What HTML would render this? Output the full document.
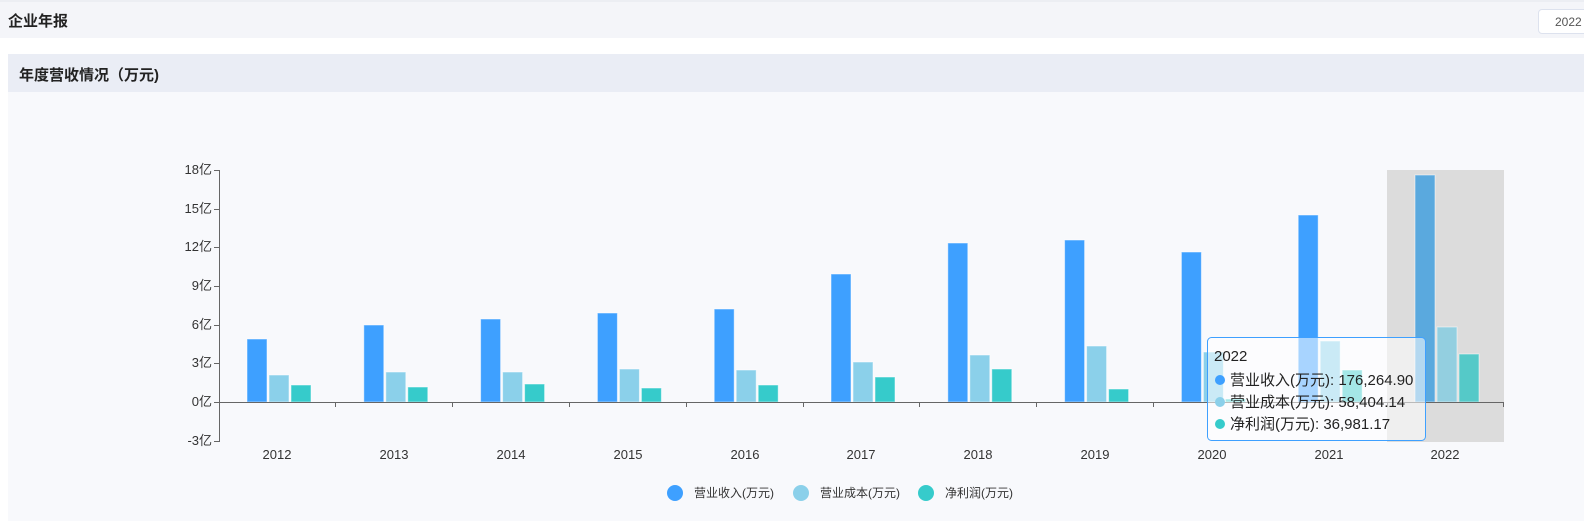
<!DOCTYPE html>
<html><head><meta charset="utf-8"><style>
*{margin:0;padding:0;box-sizing:border-box}
body{width:1584px;height:521px;background:#fff;font-family:"Liberation Sans","Noto Sans CJK SC",sans-serif;position:relative;overflow:hidden}
.top{position:absolute;left:0;top:0;width:1584px;height:38px;background:#f4f5f9;border-top:2px solid #eceef3}
.top .t{position:absolute;left:8px;top:8px;font-size:15px;font-weight:bold;color:#222}
.sel{position:absolute;left:1538px;top:7px;width:80px;height:25px;background:#fff;border:1px solid #dde2ee;border-radius:4px;font-size:12px;color:#555;padding:5px 0 0 16px}
.sec{position:absolute;left:8px;top:54px;width:1576px;height:38px;background:#eaedf5}
.sec .t{position:absolute;left:11px;top:10px;font-size:15px;font-weight:bold;color:#222}
.chart{position:absolute;left:8px;top:92px;width:1576px;height:429px;background:#f8f9fc}
svg{position:absolute;left:0;top:0}
</style></head><body>
<div class="top"><div class="t">企业年报</div><div class="sel">2022</div></div>
<div class="sec"><div class="t">年度营收情况（万元)</div></div>
<div class="chart"></div>
<svg width="1584" height="521" font-family="Liberation Sans, Noto Sans CJK SC, sans-serif">
<rect x="1387" y="170" width="117" height="272" fill="#dcdcdc"/>
<g font-size="13" fill="#333" text-anchor="end">
<text x="212" y="174">18亿</text><text x="212" y="213">15亿</text><text x="212" y="251">12亿</text><text x="212" y="290">9亿</text><text x="212" y="329">6亿</text><text x="212" y="367">3亿</text><text x="212" y="406">0亿</text><text x="212" y="445">-3亿</text>
</g>
<g stroke="#666" stroke-width="1">
<line x1="219.5" y1="170" x2="219.5" y2="442"/>
<line x1="214" y1="170.5" x2="219" y2="170.5"/><line x1="214" y1="209.5" x2="219" y2="209.5"/><line x1="214" y1="247.5" x2="219" y2="247.5"/><line x1="214" y1="286.5" x2="219" y2="286.5"/><line x1="214" y1="325.5" x2="219" y2="325.5"/><line x1="214" y1="363.5" x2="219" y2="363.5"/><line x1="214" y1="402.5" x2="219" y2="402.5"/><line x1="214" y1="441.5" x2="219" y2="441.5"/>
</g>
<g stroke="#fff" stroke-opacity=".5" stroke-width="1">
<g fill="#3ea0ff">
<rect x="247" y="339" width="20" height="63"/><rect x="363.8" y="325" width="20" height="77"/><rect x="480.6" y="319" width="20" height="83"/><rect x="597.4" y="313" width="20" height="89"/><rect x="714.2" y="309" width="20" height="93"/><rect x="831" y="274" width="20" height="128"/><rect x="947.8" y="243" width="20" height="159"/><rect x="1064.6" y="240" width="20" height="162"/><rect x="1181.4" y="252" width="20" height="150"/><rect x="1298.2" y="215" width="20" height="187"/><rect x="1415" y="175" width="20" height="227" fill="#5aa9de"/>
</g>
<g fill="#8bd0ea">
<rect x="269" y="375" width="20" height="27"/><rect x="385.8" y="372" width="20" height="30"/><rect x="502.6" y="372" width="20" height="30"/><rect x="619.4" y="369" width="20" height="33"/><rect x="736.2" y="370" width="20" height="32"/><rect x="853" y="362" width="20" height="40"/><rect x="969.8" y="355" width="20" height="47"/><rect x="1086.6" y="346" width="20" height="56"/><rect x="1203.4" y="352" width="20" height="50"/><rect x="1320.2" y="341" width="20" height="61"/><rect x="1437" y="327" width="20" height="75" fill="#93cfe0"/>
</g>
<g fill="#36cbcb">
<rect x="291" y="385" width="20" height="17"/><rect x="407.8" y="387" width="20" height="15"/><rect x="524.6" y="384" width="20" height="18"/><rect x="641.4" y="388" width="20" height="14"/><rect x="758.2" y="385" width="20" height="17"/><rect x="875" y="377" width="20" height="25"/><rect x="991.8" y="369" width="20" height="33"/><rect x="1108.6" y="389" width="20" height="13"/><rect x="1225.4" y="399" width="20" height="3"/><rect x="1342.2" y="370" width="20" height="32"/><rect x="1459" y="354" width="20" height="48" fill="#55c9c8"/>
</g>
</g>
<g stroke="#666" stroke-width="1">
<line x1="219" y1="402.5" x2="1504" y2="402.5"/>
<line x1="335.5" y1="402" x2="335.5" y2="407"/><line x1="452.5" y1="402" x2="452.5" y2="407"/><line x1="569.5" y1="402" x2="569.5" y2="407"/><line x1="686.5" y1="402" x2="686.5" y2="407"/><line x1="803.5" y1="402" x2="803.5" y2="407"/><line x1="919.5" y1="402" x2="919.5" y2="407"/><line x1="1036.5" y1="402" x2="1036.5" y2="407"/><line x1="1153.5" y1="402" x2="1153.5" y2="407"/><line x1="1270.5" y1="402" x2="1270.5" y2="407"/><line x1="1387.5" y1="402" x2="1387.5" y2="407"/><line x1="1503.5" y1="402" x2="1503.5" y2="407"/>
</g>
<g font-size="13" fill="#333" text-anchor="middle">
<text x="277" y="459">2012</text><text x="394" y="459">2013</text><text x="511" y="459">2014</text><text x="628" y="459">2015</text><text x="745" y="459">2016</text><text x="861" y="459">2017</text><text x="978" y="459">2018</text><text x="1095" y="459">2019</text><text x="1212" y="459">2020</text><text x="1329" y="459">2021</text><text x="1445" y="459">2022</text>
</g>
<rect x="1207.5" y="337.5" width="218" height="103" rx="4" fill="#fff" fill-opacity=".55" stroke="#3ea0ff"/>
<g font-size="15" fill="#222">
<text x="1214" y="361">2022</text>
<circle cx="1220" cy="380" r="5" fill="#3ea0ff"/><text x="1230" y="385">营业收入(万元): 176,264.90</text>
<circle cx="1220" cy="402" r="5" fill="#8bd0ea"/><text x="1230" y="407">营业成本(万元): 58,404.14</text>
<circle cx="1220" cy="424" r="5" fill="#36cbcb"/><text x="1230" y="429">净利润(万元): 36,981.17</text>
</g>
<g font-size="12" fill="#333">
<circle cx="675" cy="493" r="8" fill="#3ea0ff"/><text x="694" y="497">营业收入(万元)</text>
<circle cx="801" cy="493" r="8" fill="#8bd0ea"/><text x="820" y="497">营业成本(万元)</text>
<circle cx="926" cy="493" r="8" fill="#36cbcb"/><text x="945" y="497">净利润(万元)</text>
</g>
</svg>
</body></html>
